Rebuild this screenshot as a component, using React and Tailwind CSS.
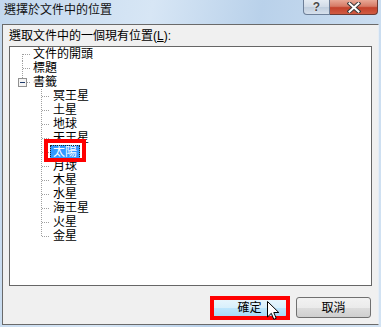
import React from "react";

const roots = [
  { label: "文件的開頭", kind: "first" },
  { label: "標題", kind: "mid" },
  { label: "書籤", kind: "last", open: true },
];

const children = ["冥王星", "土星", "地球", "天王星", "太陽", "月球", "木星", "水星", "海王星", "火星", "金星"];

// dotted connector for a root row
function RootLines({ kind, open }) {
  const top = kind === "first" ? 7 : 0;
  const bottom = kind === "last" ? 7 : 14;
  return (
    <svg width="20" height="14" className="shrink-0">
      <line x1="12.5" y1={top} x2="12.5" y2={bottom} stroke="#a0a0a0" strokeDasharray="1 1" />
      <line x1={open ? 17 : 13} y1="7.5" x2="21" y2="7.5" stroke="#a0a0a0" strokeDasharray="1 1" />
      {open && (
        <g>
          <rect x="8.5" y="3.5" width="8" height="8" fill="#f4f4f4" stroke="#919191" />
          <line x1="10" y1="7.5" x2="15" y2="7.5" stroke="#1f3b6b" />
        </g>
      )}
    </svg>
  );
}

// dotted connector for a child row
function ChildLines({ last }) {
  return (
    <svg width="40" height="14" className="shrink-0">
      <line x1="31.5" y1="0" x2="31.5" y2={last ? 7 : 14} stroke="#a0a0a0" strokeDasharray="1 1" />
      <line x1="32" y1="7.5" x2="40" y2="7.5" stroke="#a0a0a0" strokeDasharray="1 1" />
    </svg>
  );
}

function WinButton({ children, hot }) {
  return (
    <div
      className={
        "relative w-[75px] h-[21px] rounded-[3px] border flex items-center justify-center text-[12px] text-black " +
        (hot
          ? "border-[#3c7fb1] bg-[linear-gradient(to_bottom,#eaf6fd_0%,#d9f0fc_50%,#bee6fd_51%,#a7d9f5_100%)]"
          : "border-[#707070] bg-[linear-gradient(to_bottom,#f2f2f2_0%,#ebebeb_50%,#dddddd_51%,#cfcfcf_100%)]")
      }
    >
      <span className="leading-[14px]">{children}</span>
      {hot && (
        <>
          <span className="absolute -left-[3px] -right-[4px] -top-[2px] -bottom-[3px] border-4 border-[#ff0000]" />
          <svg width="13" height="20" viewBox="0 0 13 20" className="absolute left-[54px] top-[3px]">
            <path d="M0.5 0.5 L0.5 16 L4.3 12.3 L6.8 18.3 L9.2 17.3 L6.8 11.5 L11.8 11.5 Z" fill="#fff" stroke="#000" strokeLinejoin="round" />
          </svg>
        </>
      )}
    </div>
  );
}

export default function App() {
  return (
    <div className="w-[381px] h-[327px] overflow-hidden flex flex-col bg-[linear-gradient(100deg,#c3d8ee_0%,#d7e6f5_35%,#b9d1ea_60%,#d3e3f3_100%)] font-['Liberation_Sans','Noto_Sans_CJK_TC',sans-serif] text-[12px]">
      {/* Title bar */}
      <div className="h-[24px] flex items-start justify-between shrink-0">
        <span className="pl-[4px] pt-[3px] leading-[14px] text-[#111]">選擇於文件中的位置</span>
        <div className="flex mr-[3px]">
          <div className="w-[27px] h-[15px] rounded-bl-[4px] border border-t-0 border-[#6d7f98] bg-[linear-gradient(to_bottom,#e4ebf3_0%,#d1dbe7_50%,#bfcddd_51%,#d6e0ec_100%)] flex items-center justify-center">
            <span className="text-[12px] font-bold leading-[12px] text-[#4a4a4a] [text-shadow:0_0_2px_#fff]">?</span>
          </div>
          <div className="w-[48px] h-[15px] rounded-br-[4px] border border-l-0 border-t-0 border-[#6d3a33] bg-[linear-gradient(to_bottom,#e8a896_0%,#d67a66_45%,#c3412b_55%,#d15c43_100%)] flex items-center justify-center">
            <svg width="14" height="11" viewBox="0 0 14 11">
              <path d="M2.5 1.5 L11.5 9.5 M11.5 1.5 L2.5 9.5" stroke="#3a3a3a" strokeWidth="4" strokeLinecap="square" />
              <path d="M2.5 1.5 L11.5 9.5 M11.5 1.5 L2.5 9.5" stroke="#ffffff" strokeWidth="2" strokeLinecap="square" />
            </svg>
          </div>
        </div>
      </div>

      {/* Dialog body */}
      <div className="flex-1 mx-[2px] mb-[2px] border border-[#6a6a6a] border-r-[#e6edf5] bg-[#f0f0f0] flex flex-col">
        <p className="pl-[6px] pt-[4px] leading-[14px] text-black">
          選取文件中的一個現有位置(<span className="underline">L</span>):
        </p>

        {/* Tree view */}
        <div className="mx-[6px] mt-[3px] h-[240px] border border-[#666] bg-white text-black">
          {roots.map((r) => (
            <div key={r.label}>
              <div className="h-[14px] flex items-center">
                <RootLines kind={r.kind} open={r.open} />
                <span className="px-[3px] leading-[14px]">{r.label}</span>
              </div>
              {r.open &&
                children.map((c, i) => (
                  <div key={c} className="h-[14px] flex items-center">
                    <ChildLines last={i === children.length - 1} />
                    {c === "太陽" ? (
                      <span className="relative px-[3px] leading-[14px] bg-[#3399ff] text-white outline-1 outline-dotted -outline-offset-1 outline-[#222]">
                        {c}
                        <span className="absolute -left-[6px] -right-[6px] -top-[6px] -bottom-[3px] border-4 border-[#ff0000]" />
                      </span>
                    ) : (
                      <span className="px-[3px] leading-[14px]">{c}</span>
                    )}
                  </div>
                ))}
            </div>
          ))}
        </div>

        {/* Buttons */}
        <div className="flex justify-end gap-[9px] mt-[11px] pr-[7px]">
          <WinButton hot>確定</WinButton>
          <WinButton>取消</WinButton>
        </div>
      </div>
    </div>
  );
}
